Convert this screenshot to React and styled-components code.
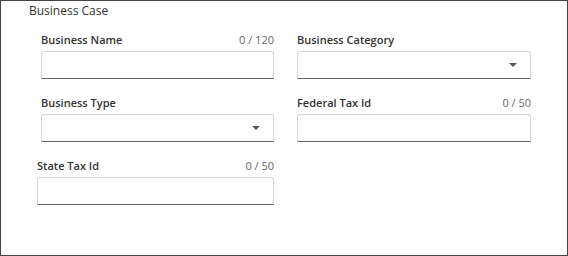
import styled, { createGlobalStyle } from "styled-components";

const GlobalStyle = createGlobalStyle`
  html, body {
    margin: 0;
    padding: 0;
    background: #ffffff;
  }
  body {
    font-family: "Open Sans", "Noto Sans", sans-serif;
    color: #333333;
  }
`;

const fields = [
  { label: "Business Name", counter: "0 / 120" },
  { label: "Business Category", select: true },
  { label: "Business Type", select: true },
  { label: "Federal Tax Id", counter: "0 / 50" },
  { label: "State Tax Id", counter: "0 / 50", shift: true },
];

function App() {
  return (
    <>
      <GlobalStyle />
      <Panel>
        <Legend>Business Case</Legend>
        <Grid>
          {fields.map((f) => (
            <Field key={f.label} $shift={f.shift}>
              <LabelRow>
                <Label>{f.label}</Label>
                {f.counter && <Counter>{f.counter}</Counter>}
              </LabelRow>
              <Input>{f.select && <Caret />}</Input>
            </Field>
          ))}
        </Grid>
      </Panel>
    </>
  );
}

const Panel = styled.div`
  width: 568px;
  height: 256px;
  box-sizing: border-box;
  border: 1px solid #444444;
  display: flex;
  flex-direction: column;
`;

const Legend = styled.div`
  font-size: 12px;
  line-height: 18px;
  color: #333333;
  padding: 1px 0 0 28px;
`;

const Grid = styled.div`
  display: grid;
  grid-template-columns: 233px 234px;
  column-gap: 23px;
  row-gap: 15px;
  padding: 11px 0 0 40px;
`;

const Field = styled.div`
  display: flex;
  flex-direction: column;
  gap: 4px;
  margin-left: ${(p) => (p.$shift ? "-4px" : "0")};
`;

const LabelRow = styled.div`
  display: flex;
  justify-content: space-between;
  align-items: center;
  height: 16px;
`;

const Label = styled.span`
  font-size: 11px;
  font-weight: 600;
  color: #333333;
`;

const Counter = styled.span`
  font-size: 11px;
  color: #666666;
`;

const Input = styled.div`
  height: 28px;
  box-sizing: border-box;
  border: 1px solid #d6d6d6;
  border-bottom-color: #666666;
  border-radius: 3px 3px 0 0;
  display: flex;
  align-items: center;
  justify-content: flex-end;
  padding-right: 13px;
`;

const Caret = styled.span`
  width: 0;
  height: 0;
  border-left: 4px solid transparent;
  border-right: 4px solid transparent;
  border-top: 4px solid #555555;
`;

export default App;
